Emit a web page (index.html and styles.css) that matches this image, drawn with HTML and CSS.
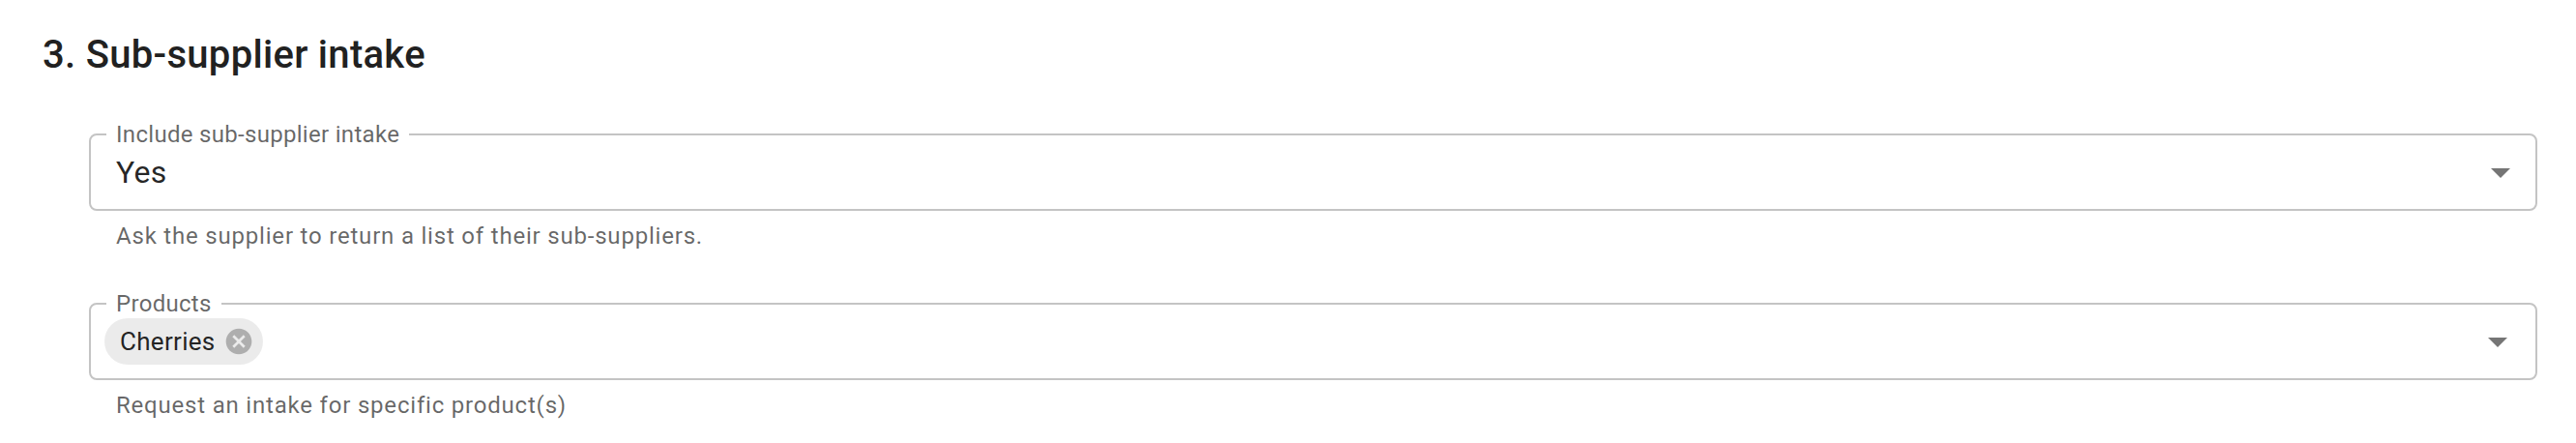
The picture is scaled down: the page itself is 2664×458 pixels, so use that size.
FILE: index.html
```html
<!DOCTYPE html>
<html>
	<head>
		<meta charset="utf-8">
		<title>Sub-supplier intake</title>
		<link rel="stylesheet" href="styles.css">
	</head>
	<body>
		<div class="section">
			<h2 class="title">3. Sub-supplier intake</h2>
			<div class="fields">
				<!-- 是否包含 -->
				<div class="field">
					<fieldset class="box">
						<legend>Include sub-supplier intake</legend>
						<div class="row">
							<span class="value">Yes</span>
							<svg class="arrow" viewBox="0 0 24 24"><path d="M7 10l5 5 5-5z"/></svg>
						</div>
					</fieldset>
					<p class="helper">Ask the supplier to return a list of their sub-suppliers.</p>
				</div>
				<!-- 产品 -->
				<div class="field field-next">
					<fieldset class="box">
						<legend>Products</legend>
						<div class="row row-chips">
							<div class="chip">
								<span class="chip-label">Cherries</span>
								<svg class="chip-delete" viewBox="0 0 24 24"><path d="M12 2C6.47 2 2 6.47 2 12s4.47 10 10 10 10-4.47 10-10S17.53 2 12 2zm5 13.59L15.59 17 12 13.41 8.41 17 7 15.59 10.59 12 7 8.41 8.41 7 12 10.59 15.59 7 17 8.41 13.41 12 17 15.59z"/></svg>
							</div>
							<svg class="arrow arrow-auto" viewBox="0 0 24 24"><path d="M7 10l5 5 5-5z"/></svg>
						</div>
					</fieldset>
					<p class="helper">Request an intake for specific product(s)</p>
				</div>
			</div>
		</div>
	</body>
</html>
```
FILE: styles.css
```css
body{
	margin: 0;
	background: #fff;
	font-family: Roboto, "Liberation Sans", sans-serif;
	color: rgba(0,0,0,0.87);
}
.section{
	padding: 25px 40px 0 44px;
}
.title{
	margin: 0;
	font-size: 40px;
	font-weight: 500;
	line-height: 64px;
	letter-spacing: 0.3px;
	color: #212121;
}
.fields{
	margin-top: 38px;
	margin-left: 48px;
}
.field-next{margin-top: 38px;}

.box{
	margin: 0;
	padding: 0 14px 11px 16px;
	border: 2px solid #c4c4c4;
	border-radius: 8px;
	min-width: 0;
}
.box legend{
	padding: 0 10px;
	font-size: 24px;
	line-height: 24px;
	letter-spacing: 0.3px;
	color: rgba(0,0,0,0.6);
}
.row{
	display: flex;
	align-items: center;
	height: 54px;
	padding-left: 10px;
}
.row-chips{padding-left: 0;}
.value{
	flex: 1;
	font-size: 32px;
	letter-spacing: 0.3px;
}
.arrow{
	width: 48px;
	height: 48px;
	fill: rgba(0,0,0,0.54);
	margin-right: -2px;
}
.arrow-auto{margin-left: auto;margin-right: 1px;}

.chip{
	display: flex;
	align-items: center;
	height: 48px;
	margin-left: -2px;
	border-radius: 24px;
	background: rgba(0,0,0,0.08);
}
.chip-label{
	padding: 0 8px 0 16px;
	font-size: 26px;
	letter-spacing: 0.3px;
	color: rgba(0,0,0,0.87);
}
.chip-delete{
	width: 32px;
	height: 32px;
	margin-right: 9px;
	fill: rgba(0,0,0,0.26);
}
.helper{
	margin: 6px 28px 0;
	font-size: 24px;
	line-height: 40px;
	letter-spacing: 0.8px;
	color: rgba(0,0,0,0.6);
}
```
